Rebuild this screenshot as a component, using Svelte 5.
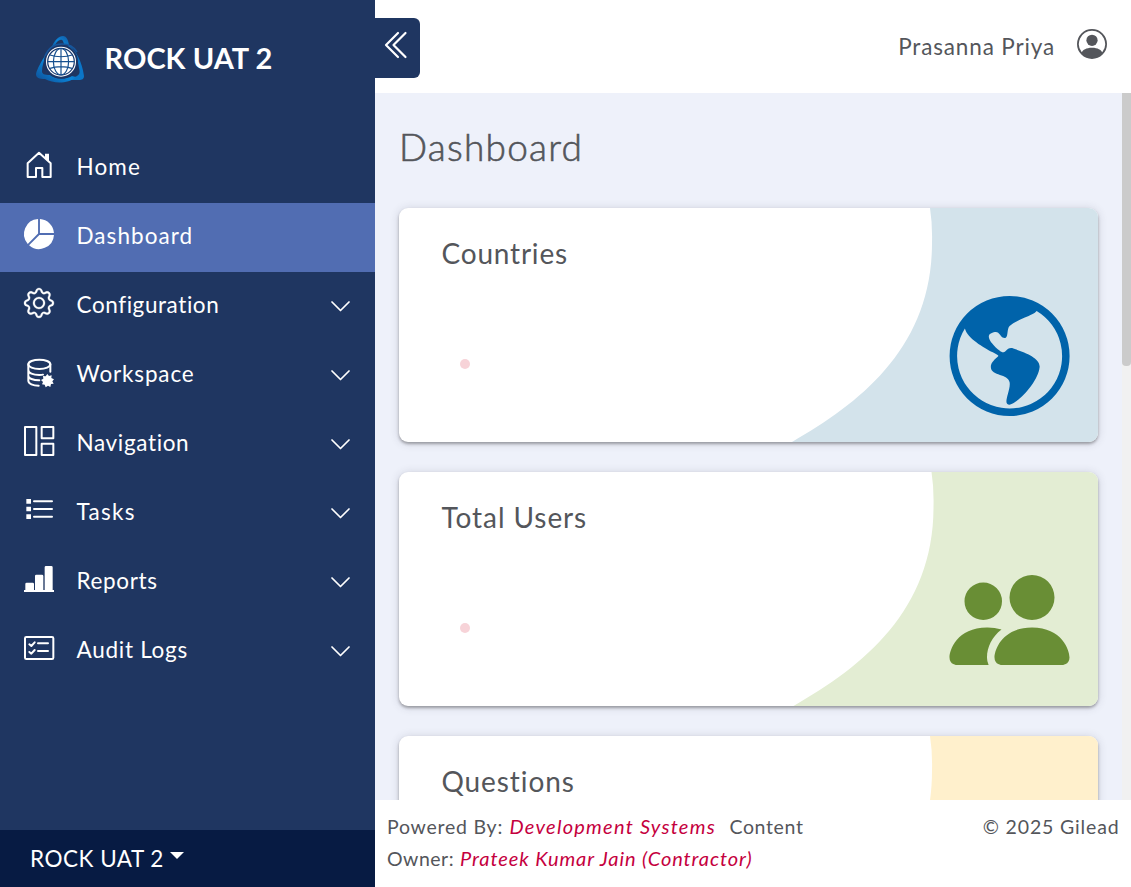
<script>
  const menu = [
    { label: 'Home', icon: 'home', spacing: 1.1 },
    { label: 'Dashboard', icon: 'pie', active: true, spacing: 1.05 },
    { label: 'Configuration', icon: 'gear', more: true, spacing: 0.58 },
    { label: 'Workspace', icon: 'database', more: true, spacing: 0.85 },
    { label: 'Navigation', icon: 'layout', more: true, spacing: 0.65 },
    { label: 'Tasks', icon: 'list', more: true, spacing: 1.3 },
    { label: 'Reports', icon: 'bars', more: true, spacing: 0.65 },
    { label: 'Audit Logs', icon: 'audit', more: true, spacing: 0.72 }
  ];
  const cards = [
    { title: 'Countries', tint: '#d3e3eb', color: '#0063aa', icon: 'globe', shift: 0, spacing: 0.8 },
    { title: 'Total Users', tint: '#e3edd3', color: '#698e35', icon: 'people', shift: 1.5, spacing: 0.92 },
    { title: 'Questions', tint: '#fff0cc', color: '#c98b00', icon: '', shift: 0, spacing: 0.9 }
  ];
</script>

<div class="app">
  <aside>
    <div class="brand">
      <svg class="logo" viewBox="0 0 48 48">
        <defs>
          <linearGradient id="ribbon" x1="0" y1="1" x2="1" y2="0">
            <stop offset="0" stop-color="#0f4c91" />
            <stop offset="0.5" stop-color="#0a84d8" />
            <stop offset="1" stop-color="#1458a0" />
          </linearGradient>
        </defs>
        <path d="M15 14C18 5 23 1 27 1c3 0 5 3 6 9l-5-1c-1-4-2-5-4-4-3 1-5 4-6 8Z" fill="url(#ribbon)" />
        <path d="M33 10c7 6 13 16 15 31 0 3-2 4-5 4l-10 0 8-4c3-2 3-4 2-8C42 24 38 16 32 12Z" fill="#0b76c8" />
        <path d="M10 19C5 27 1 34 0 39c0 4 3 5 9 5 9 5 23 5 31-2l-4-1c-7 4-17 3-22-1-6 0-8-1-8-4 0-5 2-10 4-17Z" fill="url(#ribbon)" />
        <circle cx="25" cy="26.700" r="17" fill="#1b3565" />
        <path d="M9 21c3-7 9-12 17-12 7 0 12 3 15 8" fill="none" stroke="#17559b" stroke-width="1.500" />
        <circle cx="25" cy="26.700" r="15" fill="#fff" />
        <circle cx="25" cy="26.700" r="13.300" fill="#fff" stroke="#17396f" stroke-width="1.200" />
        <g fill="none" stroke="#17508f" stroke-width="1.200">
          <path d="M25 13.500v26.400M11.700 26.700h26.600M14 20c6 2.300 16 2.300 22 0M14 33.400c6-2.300 16-2.300 22 0" />
          <ellipse cx="25" cy="26.700" rx="7.600" ry="13.200" />
        </g>
      </svg>
      <span>ROCK UAT 2</span>
    </div>

    <nav>
      {#each menu as item}
        <div class="item" class:active={item.active}>
          <svg class="icon" viewBox={item.icon === 'pie' || item.icon === 'gear' ? '0 0 16 16' : '0 0 90 90'}>
            {#if item.icon === 'home'}
              <path class="line" d="M11 81V40L45 8.500 80 40v41H55V54H36v27Z" />
              <path d="M63 11h12v24L63 24Z" />
            {:else if item.icon === 'pie'}
              <path d="M15.985 8.5H8.207l-5.5 5.5a8 8 0 0 0 13.277-5.5zM2 13.292A8 8 0 0 1 7.500.015v7.778zM8.500.015V7.500h7.485A8 8 0 0 0 8.500.015" />
            {:else if item.icon === 'gear'}
              <g stroke="#fff" stroke-width="0.150">
                <path d="M8 4.754a3.246 3.246 0 1 0 0 6.492 3.246 3.246 0 0 0 0-6.492zM5.754 8a2.246 2.246 0 1 1 4.492 0 2.246 2.246 0 0 1-4.492 0z" />
                <path d="M9.796 1.343c-.527-1.79-3.065-1.79-3.592 0l-.094.319a.873.873 0 0 1-1.255.52l-.292-.16c-1.64-.892-3.433.902-2.54 2.541l.159.292a.873.873 0 0 1-.52 1.255l-.319.094c-1.79.527-1.79 3.065 0 3.592l.319.094a.873.873 0 0 1 .52 1.255l-.16.292c-.892 1.64.901 3.434 2.541 2.54l.292-.159a.873.873 0 0 1 1.255.52l.094.319c.527 1.79 3.065 1.79 3.592 0l.094-.319a.873.873 0 0 1 1.255-.52l.292.16c1.64.893 3.434-.902 2.54-2.541l-.159-.292a.873.873 0 0 1 .52-1.255l.319-.094c1.79-.527 1.79-3.065 0-3.592l-.319-.094a.873.873 0 0 1-.52-1.255l.16-.292c.893-1.64-.902-3.433-2.541-2.54l-.292.159a.873.873 0 0 1-1.255-.52l-.094-.319zm-2.633.283c.246-.835 1.428-.835 1.674 0l.094.319a1.873 1.873 0 0 0 2.693 1.115l.291-.16c.764-.415 1.6.42 1.184 1.185l-.159.292a1.873 1.873 0 0 0 1.116 2.692l.318.094c.835.246.835 1.428 0 1.674l-.319.094a1.873 1.873 0 0 0-1.115 2.693l.16.291c.415.764-.42 1.6-1.185 1.184l-.291-.159a1.873 1.873 0 0 0-2.693 1.116l-.094.318c-.246.835-1.428.835-1.674 0l-.094-.319a1.873 1.873 0 0 0-2.692-1.115l-.292.16c-.764.415-1.6-.42-1.184-1.185l.159-.291A1.873 1.873 0 0 0 1.945 8.930l-.319-.094c-.835-.246-.835-1.428 0-1.674l.319-.094A1.873 1.873 0 0 0 3.060 4.377l-.16-.292c-.415-.764.42-1.6 1.185-1.184l.292.159a1.873 1.873 0 0 0 2.692-1.115l.094-.319z" />
              </g>
            {:else if item.icon === 'database'}
              <ellipse class="line" cx="46" cy="22" rx="33" ry="14" />
              <path class="line" d="M13 22v49c0 9 14 15 31 15M79 22v22M13 39c0 9 14 15 33 15 4 0 8 0 11-1M13 56c0 8 14 14 33 14" />
              <path d="M70 51l5 6 8-2-1 8 8 4-5 6 4 7-8 1-2 9-7-4-7 5-3-8-8-1 3-7-6-6 7-4-1-8 8 1Z" />
            {:else if item.icon === 'layout'}
              <path class="line" d="M3 3h34v84H3ZM53 3h35v34H53ZM53 53h35v34H53Z" />
            {:else if item.icon === 'list'}
              <path d="M7 12h14v14H7ZM7 35h14v14H7ZM7 58h14v14H7Z" />
              <path class="line" d="M30 19h54M30 42h54M30 65h54" />
            {:else if item.icon === 'bars'}
              <path d="M0 78h4V60q0-4 4-4h18q4 0 4 4v18h3V36q0-4 4-4h17q4 0 4 4v42h4V10q0-4 4-4h16q4 0 4 4v68h4v6H0Z" />
            {:else}
              <rect class="line" x="3" y="12" width="85" height="66" rx="4" />
              <path class="line" d="M16 34l6 5 10-11M16 57l6 5 10-11M42 31h30M42 54h30" />
            {/if}
          </svg>
          <span class="label" style="letter-spacing: {item.spacing}px">{item.label}</span>
          {#if item.more}
            <svg class="chevron" viewBox="0 0 20 12"><path d="M2 2l8.500 8.500L19 2" /></svg>
          {/if}
        </div>
      {/each}
    </nav>

    <div class="workspace"><span>ROCK UAT 2</span><i></i></div>
  </aside>

  <main>
    <header>
      <button aria-label="Collapse">
        <svg viewBox="0 0 24 28"><path d="M14 2L2 14l12 12M21.500 2l-12 12 12 12" /></svg>
      </button>
      <div class="user">
        <span>Prasanna Priya</span>
        <svg viewBox="0 0 16 16">
          <path d="M11 6a3 3 0 1 1-6 0 3 3 0 0 1 6 0" />
          <path fill-rule="evenodd" d="M0 8a8 8 0 1 1 16 0A8 8 0 0 1 0 8m8-7.100a7.100 7.100 0 0 0-5.468 11.470C3.242 11.226 4.805 10 8 10s4.757 1.225 5.468 2.370A7.100 7.100 0 0 0 8 .9" />
        </svg>
      </div>
    </header>

    <div class="scroll">
      <section>
        <h1>Dashboard</h1>
        {#each cards as card}
          <article>
            <svg class="art" viewBox="0 0 699 234">
              <path fill={card.tint} transform="translate({card.shift} 0)" d="M531 0Q533.500 16 533 35C533 138 463 194 393 234H710V0Z" />
              {#if card.icon === 'globe'}
                <path fill={card.color} transform="translate(550.600 88) scale(7.500)" d="M8 0a8 8 0 1 0 0 16A8 8 0 0 0 8 0M2.040 4.326c.325 1.329 2.532 2.540 3.717 3.190.48.263.793.434.743.484q-.121.12-.242.234c-.416.396-.787.749-.758 1.266.035.634.618.824 1.214 1.017.577.188 1.168.38 1.286.983.082.417-.075.988-.22 1.520-.215.782-.406 1.480.22 1.480 1.500-.5 3.798-3.186 4-5 .138-1.243-2-2-3.500-2.500-.478-.16-.755.081-.99.284-.172.15-.322.279-.51.216-.445-.148-2.500-2-1.500-2.500.78-.39.952-.171 1.227.182.078.099.163.208.273.318.609.304.662-.132.723-.633.039-.322.081-.671.277-.867.434-.434 1.265-.791 2.028-1.120.712-.306 1.365-.587 1.579-.88A7 7 0 1 1 2.040 4.327Z" />
              {:else if card.icon === 'people'}
                <path fill={card.color} transform="translate(550.500 88) scale(7.500)" d="M7 14s-1 0-1-1 1-4 5-4 5 3 5 4-1 1-1 1zm4-6a3 3 0 1 0 0-6 3 3 0 0 0 0 6m-5.784 6A2.240 2.240 0 0 1 5 13c0-1.355.68-2.750 1.936-3.720A6.300 6.300 0 0 0 5 9c-4 0-5 3-5 4s1 1 1 1zM4.500 8a2.500 2.500 0 1 0 0-5 2.500 2.500 0 0 0 0 5" />
              {/if}
            </svg>
            <h2 style="letter-spacing: {card.spacing}px">{card.title}</h2>
            <i class="dot"></i>
          </article>
        {/each}
      </section>
      <div class="bar"><i></i></div>
    </div>

    <footer>
      <div>
        <p><span class="powered">Powered By:</span> <em class="dev">Development Systems</em><span class="content">Content</span></p>
        <p><span class="owner">Owner:</span> <em class="name">Prateek Kumar Jain (Contractor)</em></p>
      </div>
      <span class="copy">© 2025 Gilead</span>
    </footer>
  </main>
</div>

<style>
  :global(body) { margin: 0; overflow: hidden; }
  .app { display: flex; width: 1131px; height: 887px; overflow: hidden; font-family: Lato, "Open Sans", sans-serif; color: #54565b; white-space: nowrap; }
  .app svg { display: block; flex: none; }
  aside { width: 375px; flex: none; background: #1f3661; color: #fff; display: flex; flex-direction: column; }
  .brand { height: 134px; box-sizing: border-box; padding: 35px 0 0 36px; display: flex; align-items: flex-start; }
  .logo { width: 48px; height: 48px; }
  .brand span { margin-left: 20.500px; font-size: 29px; line-height: 46px; font-weight: 700; letter-spacing: 0.050px; }
  nav { flex: 1; }
  .item { height: 69px; box-sizing: border-box; padding: 0 25px 0 24px; display: flex; align-items: center; }
  .active { background: #516db2; }
  .icon { width: 30px; height: 30px; fill: #fff; overflow: visible; margin-bottom: 7px; }
  .line { fill: none; stroke: #fff; stroke-width: 6; stroke-linecap: round; stroke-linejoin: round; }
  .label { flex: 1; margin-left: 22.500px; font-size: 22.500px; line-height: 30px; margin-top: -3px; }
  .chevron { width: 20px; height: 12px; margin-bottom: 2px; fill: none; stroke: #fff; stroke-width: 1.700; stroke-linecap: round; stroke-linejoin: round; }
  .workspace { height: 57px; background: #071b43; display: flex; align-items: center; padding-left: 30px; font-size: 22.500px; letter-spacing: 0.5px; }
  .workspace i { margin: -6px 0 0 6px; border: 7px solid transparent; border-top-color: #fff; border-bottom: 0; }
  main { width: 756px; display: flex; flex-direction: column; }
  header { height: 93px; flex: none; background: #fff; display: flex; justify-content: space-between; align-items: flex-start; }
  button { margin: 18px 0 0; width: 45px; height: 60px; padding: 0 0 6px 9px; border: 0; border-radius: 0 6px 6px 0; background: #1f3661; display: flex; align-items: center; }
  button svg { width: 24px; height: 28px; fill: none; stroke: #fff; stroke-width: 2.200; stroke-linecap: round; stroke-linejoin: round; }
  .user { display: flex; padding: 29px 24px 0 0; font-size: 22.500px; line-height: 36px; letter-spacing: 0.850px; }
  .user svg { width: 30px; height: 30px; margin-left: 22px; fill: #54565b; }
  .scroll { height: 707px; display: flex; background: #eef1fa; overflow: hidden; }
  section { width: 747px; box-sizing: border-box; padding: 31px 24px 0; }
  h1, h2, p { margin: 0; font-weight: 400; }
  h1 { font-size: 37px; line-height: 46px; height: 84px; letter-spacing: 1.250px; font-weight: 300; -webkit-text-stroke: 0.600px #54565b; }
  article { position: relative; width: 699px; height: 234px; margin-bottom: 30px; border-radius: 9px; background: #fff; overflow: hidden; box-shadow: 0 2px 3px rgba(0,0,0,.3), 0 1px 10px rgba(50,50,70,.18); }
  .art { position: absolute; inset: 0; width: 699px; height: 234px; }
  h2 { position: relative; padding: 27px 0 0 42.500px; font-size: 28px; line-height: 36px; }
  .dot { display: block; width: 10px; height: 10px; margin: 88px 0 0 61px; border-radius: 50%; background: #f7d3d8; }
  .bar { width: 9px; background: #f1f1f1; }
  .bar i { display: block; height: 273px; background: #cbcbcb; border-radius: 0 0 4px 4px; }
  footer { height: 87px; box-sizing: border-box; background: #fff; padding: 11px 12px 0; display: flex; justify-content: space-between; font-size: 19.500px; line-height: 32px; }
  em { color: #c5003e; font-size: 20px; line-height: 1; }
  .powered { letter-spacing: 0.750px; }
  .owner { letter-spacing: 0.500px; }
  .dev { margin-left: 1.500px; letter-spacing: 1.250px; }
  .name { margin-left: 1px; letter-spacing: 0.920px; }
  .content { margin-left: 13.500px; letter-spacing: 0.650px; }
  .copy { letter-spacing: 0.850px; margin-right: -0.500px; }
</style>
